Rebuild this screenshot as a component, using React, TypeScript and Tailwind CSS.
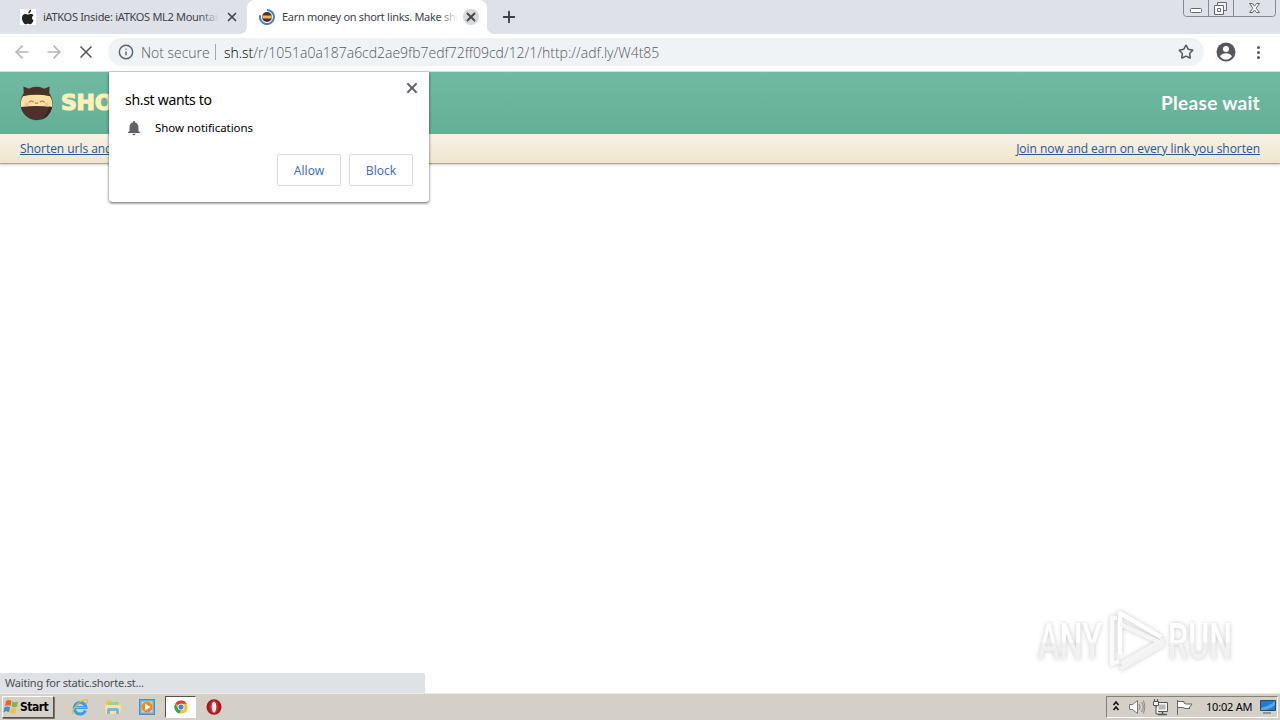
import type { ReactNode } from "react"
import { ArrowLeft, ArrowRight, X, Plus, Info, Star } from "lucide-react"

const AppleIcon = () => (
  <svg className="h-4 w-4 bg-white" viewBox="0 0 16 16" fill="#222">
    <path d="M8.3 4.5C8.2 2.4 9.400 1 11 .8c.2 1.900-1 3.500-2.700 3.700ZM13.500 11.200c-.8 2.500-2.200 4-3.300 4-.8 0-1.200-.5-2.200-.5s-1.400.5-2.200.5C4 15.200 2 11.900 2 8.900 2 6.400 3.600 5 5.300 5c1.100 0 1.900.6 2.700.6.7 0 1.600-.7 3-.6 1 0 2 .5 2.600 1.300-2.200 1.300-2.100 4 -.1 4.900Z" />
  </svg>
)

const NinjaHead = ({ className }: { className: string }) => (
  <svg className={className} viewBox="0 0 34 36">
    <path d="M4 10 3.500 1l7.500 3ZM30 10l.5-9-7.500 3Z" fill="#4b302b" />
    <ellipse cx="17" cy="18.500" rx="16.500" ry="17.300" fill="#4b302b" />
    <path d="M3 11q14-3 28 0 3 5 2 11-16-2-32 0-1-6 2-11Z" fill="#fbdfa5" />
    <path d="M9 17.500q2.500-3 5-.5M20.500 17q2.500-2.500 5 .5M15.500 17.500q1.500 1.500 3 0" fill="none" stroke="#a87855" strokeWidth="1.100" />
    <circle cx="7" cy="19.500" r="2" fill="#f6c38f" />
    <circle cx="27.500" cy="19.500" r="2" fill="#f6c38f" />
    <path d="M33 22q-2.500 11-12 13.500 8-6 9-14Z" fill="#38231f" />
  </svg>
)

const LoadingIcon = () => (
  <svg className="h-4 w-4" viewBox="0 0 16 16">
    <circle cx="8" cy="8" r="5" fill="#4b302b" />
    <path d="M3.300 6.500h9.400v3H3.300Z" fill="#f2b463" />
    <path d="M8 1a7 7 0 1 1-6.800 5.200" fill="none" stroke="#3f7fd6" strokeWidth="2" />
  </svg>
)

const ProfileIcon = () => (
  <svg className="h-5 w-5" viewBox="0 0 20 20">
    <circle cx="10" cy="10" r="9.500" fill="#55575b" />
    <circle cx="10" cy="7" r="3" fill="#fff" />
    <path d="M4 14.300c1.200-2 3.500-3 6-3s4.800 1 6 3a7.200 7.200 0 0 1-12 0Z" fill="#fff" />
  </svg>
)

const BellIcon = () => (
  <svg className="h-4 w-4" viewBox="0 0 16 16" fill="#5f6368">
    <path d="M8 15.300c.9 0 1.600-.6 1.600-1.500H6.400c0 .9.700 1.500 1.600 1.500ZM12.500 11V7.300c0-2.300-1.200-4.200-3.400-4.700V2C9.100 1.400 8.600 1 8 1s-1.100.4-1.100 1v.6C4.700 3.100 3.500 5 3.500 7.300V11L2 12.300v.7h12v-.7L12.500 11Z" />
  </svg>
)

const WindowControls = () => (
  <svg className="absolute right-[3px] top-0 h-[17px] w-[94px]" viewBox="0 0 94 17" fill="none" stroke="#85888e">
    <path d="M.5 0v13.500q0 3 3 3h86q3 0 3-3V0M25.500 0v16M50.500 0v16" />
    <rect x="7.500" y="8.500" width="11" height="4" rx="1" fill="#fff" stroke="#666a70" />
    <path d="M34.500 2.500h9v8h-9Z" fill="#f1f1f3" stroke="#666a70" />
    <path d="M31.500 5.500h9v9h-9ZM34.500 8.500h3v3h-3Z" fill="#fff" stroke="#666a70" />
    <path d="m66.500 3.500 3 0 2 2.700 2-2.700 3 0-3.400 4.700 3.400 4.300-3 0-2-2.500-2 2.500-3 0 3.400-4.300Z" fill="#fff" stroke="#666a70" />
  </svg>
)

const TabStrip = () => (
  <div className="relative flex h-[34px] bg-[#dee1e7]">
    <div className="flex w-[247px] items-center pl-5">
      <AppleIcon />
      <div className="relative ml-[7px] w-[176px] overflow-hidden whitespace-nowrap font-['Noto_Sans',sans-serif] text-[11px] tracking-[-0.3px] text-[#404247]">
        iATKOS Inside: iATKOS ML2 Mountain
        <span className="absolute inset-y-0 right-0 w-5 bg-gradient-to-r from-transparent to-[#dee1e7]" />
      </div>
      <X className="ml-[6px] h-[14px] w-[14px] text-[#46494d]" strokeWidth={3} />
    </div>
    <div className="relative flex w-[240px] items-center rounded-t-lg bg-white pl-3">
      <span className="absolute -left-2 bottom-0 h-2 w-2 bg-[radial-gradient(circle_at_top_left,transparent_8px,white_8px)]" />
      <span className="absolute -right-2 bottom-0 h-2 w-2 bg-[radial-gradient(circle_at_top_right,transparent_8px,white_8px)]" />
      <LoadingIcon />
      <div className="relative ml-[7px] w-[176px] overflow-hidden whitespace-nowrap font-['Noto_Sans',sans-serif] text-[11px] tracking-[-0.3px] text-[#404247]">
        Earn money on short links. Make shorter
        <span className="absolute inset-y-0 right-0 w-5 bg-gradient-to-r from-transparent to-white" />
      </div>
      <span className="ml-[5px] flex h-4 w-4 items-center justify-center rounded-full bg-[#d7d8da]">
        <X className="h-[14px] w-[14px] text-[#46494d]" strokeWidth={3.2} />
      </span>
    </div>
    <Plus className="ml-[13px] mt-2 h-[18px] w-[18px] text-[#3c4043]" strokeWidth={2.5} />
    <WindowControls />
  </div>
)

const Toolbar = () => (
  <div className="flex h-[38px] items-center border-b border-[#d5dedc] bg-white pb-px pl-3">
    <ArrowLeft className="h-5 w-5 text-[#b5b6b8]" strokeWidth={2} />
    <ArrowRight className="ml-3 h-5 w-5 text-[#b5b6b8]" strokeWidth={2} />
    <X className="ml-3 h-5 w-5 text-[#55585c]" strokeWidth={2} />
    <div className="ml-3 flex h-7 w-[1096px] items-center whitespace-nowrap rounded-full bg-[#f0f3f5] pl-[10px] font-['Open_Sans','Noto_Sans',sans-serif] text-[14px] font-light text-[#55585d]">
      <Info className="h-4 w-4 text-[#5f6368]" strokeWidth={2.2} />
      <span className="ml-[7px] w-[67px] tracking-[-0.02px]">Not secure</span>
      <span className="ml-[7px] h-4 w-px bg-[#a5a7ab]" />
      <span className="ml-2 tracking-[-0.02px]">
        <span className="text-black">sh.st</span>/r/1051a0a187a6cd2ae9fb7edf72ff09cd/12/1/http://adf.ly/W4t85
      </span>
      <Star className="ml-auto mr-[10px] h-4 w-4 text-[#55585c]" strokeWidth={2.3} />
    </div>
    <div className="ml-3">
      <ProfileIcon />
    </div>
    <div className="ml-[21px] flex flex-col gap-[2px]">
      <span className="h-[3px] w-[3px] rounded-full bg-[#55585c]" />
      <span className="h-[3px] w-[3px] rounded-full bg-[#55585c]" />
      <span className="h-[3px] w-[3px] rounded-full bg-[#55585c]" />
    </div>
  </div>
)

const DialogButton = ({ children }: { children: ReactNode }) => (
  <button className="h-8 w-16 rounded-[2px] border border-[#dadce0] pt-[2px] text-[12px] text-[#3f70cc]">{children}</button>
)

// Chrome permission bubble, floats over the page
const PermissionDialog = () => (
  <div className="absolute left-[109px] top-[72px] h-[130px] w-[320px] rounded-b-[3px] bg-white px-4 font-['Noto_Sans',sans-serif] text-black shadow-[0_1px_3px_rgba(0,0,0,0.65)]">
    <X className="absolute right-[9px] top-2 h-4 w-4 text-[#5f6368]" strokeWidth={3} />
    <div className="pt-[18px] text-[14px] leading-5 tracking-[-0.3px]">sh.st wants to</div>
    <div className="mt-[10px] flex h-4 items-center gap-[13px] pl-px text-[11.5px]">
      <BellIcon />
      <span className="tracking-[-0.05px]">Show notifications</span>
    </div>
    <div className="mt-[18px] flex justify-end gap-2">
      <DialogButton>Allow</DialogButton>
      <DialogButton>Block</DialogButton>
    </div>
  </div>
)

const PageHeader = () => (
  <header>
    <div className="flex h-[62px] items-center justify-between bg-gradient-to-b from-[#70baa1] to-[#65af96] px-5">
      <div className="flex items-center gap-2">
        <NinjaHead className="h-9 w-[33px]" />
        <span className="font-['DejaVu_Sans',sans-serif] text-[22px] font-bold leading-8 tracking-[-0.3px] text-[#fff0b8] [-webkit-text-stroke:1.2px_#fff0b8]">SHORTE</span>
      </div>
      <span className="font-['Lato',sans-serif] text-[19px] font-bold tracking-[0.3px] text-white">Please wait</span>
    </div>
    <div className="flex h-[30px] items-center justify-between border-b border-[#aaa795] bg-gradient-to-b from-[#f8f2e4] to-[#eee6cf] px-5 font-['Open_Sans',sans-serif] text-[12px] tracking-[-0.04px] text-[#27569b] underline shadow-[0_1px_2px_rgba(0,0,0,0.2)]">
      <a>Shorten urls and earn money</a>
      <a>Join now and earn on every link you shorten</a>
    </div>
  </header>
)

const Watermark = () => (
  <div className="absolute left-[1038px] top-[608px] flex h-[66px] w-[196px] items-center justify-between">
    <svg className="h-full w-full drop-shadow-[0_0_2px_rgba(0,0,0,0.22)]" viewBox="0 0 196 66">
      <defs>
        <linearGradient id="wm" x2="0" y2="1">
          <stop offset=".5" stopColor="#fff" />
          <stop offset=".52" stopColor="#f1f1f1" />
        </linearGradient>
      </defs>
      <g fill="url(#wm)" fontFamily="Roboto, sans-serif" fontSize="50" fontWeight="500">
        <text x="0" y="51" textLength="64" lengthAdjust="spacingAndGlyphs">ANY</text>
        <text x="130" y="51" textLength="64" lengthAdjust="spacingAndGlyphs">RUN</text>
      </g>
      <g fill="none" stroke="#fff" strokeWidth="4.500" strokeLinejoin="round">
        <path d="M82 47V5l41 24" />
        <path d="M82 16l39 18-38 22" stroke="#f5f5f5" />
        <path d="M79 10h-5v46l7-3" stroke="#fafafa" />
        <path d="m82 61 42-24v-7" stroke="#f3f3f3" />
      </g>
    </svg>
  </div>
)

const WindowsFlag = () => (
  <svg className="h-4 w-4" viewBox="0 0 16 16">
    <path d="M3 2q3-2 5.500 0L7.500 7Q5 5.500 2 7Z" fill="#e8642d" />
    <path d="M9.500 2.500q2.500 1.500 5.500 0l-1 5q-3 1.500-5.500 0Z" fill="#7ab648" />
    <path d="M1.500 8.200q3-1.500 5.500 0l-1 5q-3-1.700-5.500 0Z" fill="#3d91d1" />
    <path d="M8 8.700q3 1.500 5.500 0l-1 5q-3 1.500-5.500 0Z" fill="#f7c22b" />
  </svg>
)

const ExplorerIcon = () => (
  <svg className="h-[18px] w-[18px]" viewBox="0 0 18 18" fill="none">
    <path d="M14.500 12.500a5.800 5.800 0 1 1 .4-3H4" stroke="#3b9ee0" strokeWidth="3" />
    <path d="M4 9.500h11" stroke="#75c9f2" />
    <path d="M2 16C-.5 13 9 2 14.500 1.500c3-.2 2 3 .5 5" stroke="#e4b83a" strokeWidth="1.200" />
  </svg>
)

const FolderIcon = () => (
  <svg className="h-[18px] w-[18px]" viewBox="0 0 18 18">
    <path d="M2 4V2h5l1 2h7v11H2Z" fill="#e9c966" />
    <path d="M4 4h10v4H4Z" fill="#9bd47b" />
    <path d="M1 7h16l-1 9H2Z" fill="#f7e4a0" />
    <path d="M3 16v-4q0-2 2-2h8q2 0 2 2v4h-3v-3H6v3Z" fill="#75b9df" />
  </svg>
)

const MediaIcon = () => (
  <svg className="h-4 w-4" viewBox="0 0 16 16">
    <rect x=".5" y=".5" width="15" height="15" fill="#72acdb" stroke="#4f8ac0" />
    <rect x="2.500" y="2.500" width="11" height="11" fill="#b9ddf4" />
    <circle cx="8" cy="8" r="5.500" fill="#f18a19" />
    <path d="m6 4.500 5.500 3.500L6 11.500Z" fill="#fff" />
  </svg>
)

const ChromeIcon = () => (
  <svg className="h-[14px] w-[14px]" viewBox="0 0 16 16">
    <circle cx="8" cy="8" r="7.500" fill="#fbc423" />
    <path d="M8 8 1.500 4.200A7.500 7.500 0 0 1 14.500 4.200H8Z" fill="#e33e32" />
    <path d="M1.500 4.200 5 10l3 1.500-1.500 4A7.500 7.500 0 0 1 1.500 4.200Z" fill="#36a653" />
    <circle cx="8" cy="8" r="3.800" fill="#fff" />
    <circle cx="8" cy="8" r="2.900" fill="#447fe2" />
  </svg>
)

const OperaIcon = () => (
  <svg className="h-4 w-4" viewBox="0 0 16 16">
    <ellipse cx="8" cy="8" rx="7.500" ry="7.800" fill="#a8141c" />
    <ellipse cx="8" cy="8" rx="4.700" ry="6.700" fill="#d0282f" />
    <ellipse cx="8" cy="8" rx="2.300" ry="5.500" fill="#f6ecea" />
  </svg>
)

const TrayIcons = () => (
  <svg className="h-[18px] w-[86px]" viewBox="0 0 86 18" fill="none">
    <path d="m2.500 7 2.500-3 2.500 3M2.500 12l2.500-3 2.500 3" stroke="#151515" strokeWidth="1.700" />
    <path d="M18.500 6.500h3l5-4v13l-5-4h-3Z" fill="#fafafa" stroke="#777" />
    <path d="M28 6q2 3 0 6M30.500 4q3.500 5 0 10M32.500 2.500q3 6 0 13" stroke="#898783" />
    <path d="M45.500 4.500h11v9h-11Z" fill="#f7f7f5" stroke="#555" />
    <path d="M47.500 6.500h7v5h-7Z" fill="#b5b6b3" />
    <path d="M47 16.500h9M51.500 14v2" stroke="#555" strokeWidth="1.500" />
    <path d="M42.500 3.500h5v4h-5ZM43.500 1v2M46.500 1v2M45 8v8h3" fill="#f7f7f5" stroke="#555" />
    <path d="M66.500 2v15M67 3.500h6v1.500l2 1h6l-3 4 1 .5h-5l-2-1h-5" fill="#fafafa" stroke="#666" />
  </svg>
)

const Taskbar = () => (
  <div className="flex h-[27px] items-center border-t border-[#eeeae4] bg-[#d4d0c8] pl-[2px] font-['DejaVu_Sans_Condensed','DejaVu_Sans',sans-serif] text-[11px] text-black">
    <div className="flex h-[22px] w-[52px] items-center gap-px border border-b-[#55524d] border-l-white border-r-[#55524d] border-t-white shadow-[1px_1px_#77736d]">
      <WindowsFlag />
      <span className="text-[12px] font-bold tracking-[-0.5px]">Start</span>
    </div>
    <div className="ml-[17px] flex items-center">
      <ExplorerIcon />
      <div className="ml-[15px]">
        <FolderIcon />
      </div>
      <div className="ml-[17px]">
        <MediaIcon />
      </div>
      <div className="ml-[10px] flex h-[22px] w-[31px] items-center justify-center border border-b-white border-l-[#55524d] border-r-white border-t-[#55524d] bg-white">
        <ChromeIcon />
      </div>
      <div className="ml-[10px]">
        <OperaIcon />
      </div>
    </div>
    <div className="ml-auto mr-[2px] flex h-[22px] w-[172px] items-center whitespace-nowrap border border-b-white border-l-[#85817b] border-r-white border-t-[#85817b] pl-1">
      <TrayIcons />
      <span className="ml-[9px] w-[47px] font-['Noto_Sans',sans-serif] text-[11px] tracking-[-0.2px]">10:02 AM</span>
      <svg className="ml-[7px] h-[14px] w-4" viewBox="0 0 16 14">
        <path d="M.5.5h15v10H.5Z" fill="#2679cb" stroke="#294965" />
        <path d="M1 8Q8 7 15 1v4Q11 9 5 10H1Z" fill="#55a9eb" />
        <path d="M3 13h8" stroke="#4c5965" />
      </svg>
    </div>
  </div>
)

const App = () => {
  return (
    <div className="relative flex h-[720px] w-[1280px] flex-col overflow-hidden bg-white">
      <TabStrip />
      <Toolbar />
      <PageHeader />
      <main className="flex flex-1 items-end">
        <div className="flex h-5 w-[425px] items-center rounded-tr-[3px] bg-[#dee1e6] pl-[5px] font-['Noto_Sans',sans-serif] text-[11px] tracking-[-0.2px] text-[#4b4d51]">
          Waiting for static.shorte.st...
        </div>
      </main>
      <Taskbar />
      <PermissionDialog />
      <Watermark />
    </div>
  )
}

export default App
